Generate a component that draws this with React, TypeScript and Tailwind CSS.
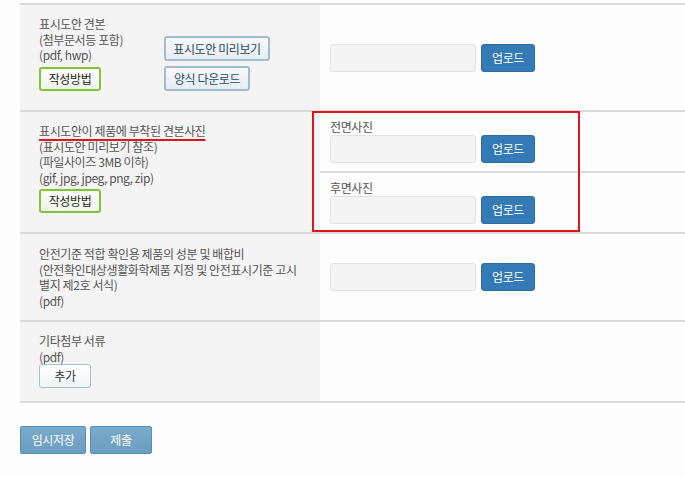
import React from 'react';

const font = { fontFamily: '"Noto Sans CJK KR", "Noto Sans", sans-serif' };

function UploadField() {
    return (
        <div className="flex items-center gap-[5px]">
            <div className="h-[28px] w-[146px] rounded-[3px] border border-[#e2e2e2] bg-[#f4f4f4]" />
            <button className="h-[28px] w-[54px] rounded-[3px] border border-[#2e6da4] bg-[#337ab7] text-[12px] leading-none text-white">
                업로드
            </button>
        </div>
    );
}

function GuideButton() {
    return (
        <button className="h-[24px] w-[62px] rounded-[3px] border-2 border-[#84c23a] bg-gradient-to-b from-white to-[#eef1ea] text-[12px] leading-none text-[#1f2a14]">
            작성방법
        </button>
    );
}

function BlueGrayButton({ label, w }: { label: string; w: string }) {
    return (
        <button className={`h-[25px] ${w} rounded-[3px] border-2 border-[#a2bccf] bg-gradient-to-b from-[#f7f9fb] to-[#e6edf2] text-[12px] leading-none text-[#2d4a62]`}>
            {label}
        </button>
    );
}

export default function App() {
    return (
        <div className="min-h-screen bg-[#fdfdfd] pl-5 pt-[3px] text-[12px] tracking-[-0.4px] text-[#555]" style={font}>
            <div className="w-[680px] border-t-2 border-[#dadada]">
                {/* 표시도안 견본 */}
                <div className="flex border-b-2 border-[#dadada]">
                    <div className="flex w-[300px] items-end bg-[#f4f4f4] pb-[19px] pl-[19px] pt-[11px]">
                        <div className="w-[125px]">
                            <div className="leading-[15.7px]">
                                표시도안 견본<br />
                                (첨부문서등 포함)<br />
                                (pdf, hwp)
                            </div>
                            <div className="mt-[4px]">
                                <GuideButton />
                            </div>
                        </div>
                        <div className="flex flex-col items-start gap-[5px]">
                            <BlueGrayButton label="표시도안 미리보기" w="w-[106px]" />
                            <BlueGrayButton label="양식 다운로드" w="w-[86px]" />
                        </div>
                    </div>
                    <div className="flex flex-1 items-center pl-[10px]">
                        <UploadField />
                    </div>
                </div>

                {/* 견본사진 */}
                <div className="relative flex border-b-2 border-[#dadada]">
                    <div className="w-[300px] bg-[#f4f4f4] pb-[19px] pl-[19px] pt-[11px]">
                        <div className="leading-[15.5px]">
                            <span className="underline decoration-[#e0141c] decoration-2 underline-offset-[3px]">표시도안이 제품에 부착된 견본사진</span><br />
                            (표시도안 미리보기 참조)<br />
                            (파일사이즈 3MB 이하)<br />
                            (gif, jpg, jpeg, png, zip)
                        </div>
                        <div className="mt-[4px]">
                            <GuideButton />
                        </div>
                    </div>
                    <div className="flex flex-1 flex-col">
                        <div className="border-b-2 border-[#dadada] pb-[8px] pl-[10px] pt-[7px]">
                            <div className="leading-[16px]">전면사진</div>
                            <UploadField />
                        </div>
                        <div className="pb-[8px] pl-[10px] pt-[7px]">
                            <div className="leading-[16px]">후면사진</div>
                            <UploadField />
                        </div>
                    </div>
                    <div className="pointer-events-none absolute left-[292px] top-[-1px] h-[121px] w-[268px] border-2 border-[#e0141c]" />
                </div>

                {/* 성분 및 배합비 */}
                <div className="flex border-b-2 border-[#dadada]">
                    <div className="w-[300px] whitespace-nowrap bg-[#f4f4f4] pb-[12px] pl-[19px] pt-[12px] leading-[15.5px]">
                        안전기준 적합 확인용 제품의 성분 및 배합비<br />
                        (안전확인대상생활화학제품 지정 및 안전표시기준 고시<br />
                        별지 제2호 서식)<br />
                        (pdf)
                    </div>
                    <div className="flex flex-1 items-center pl-[10px]">
                        <UploadField />
                    </div>
                </div>

                {/* 기타첨부 서류 */}
                <div className="flex border-b-2 border-[#dadada]">
                    <div className="w-[300px] bg-[#f4f4f4] pb-[13px] pl-[19px] pt-[11px]">
                        <div className="leading-[15.5px]">
                            기타첨부 서류<br />
                            (pdf)
                        </div>
                        <button className="h-[24px] w-[52px] rounded-[3px] border border-[#a9c0d3] bg-gradient-to-b from-white to-[#f1f4f7] text-[12px] leading-none text-[#333]">
                            추가
                        </button>
                    </div>
                    <div className="flex-1" />
                </div>
            </div>

            <div className="mt-[23px] flex gap-[4px]">
                <button className="h-[28px] w-[66px] rounded-[2px] border border-[#5b8db1] bg-gradient-to-b from-[#79abcb] to-[#6a9dc0] text-[12px] leading-none text-white">
                    임시저장
                </button>
                <button className="h-[28px] w-[62px] rounded-[2px] border border-[#5b8db1] bg-gradient-to-b from-[#79abcb] to-[#6a9dc0] text-[12px] leading-none text-white">
                    제출
                </button>
            </div>
        </div>
    );
}
